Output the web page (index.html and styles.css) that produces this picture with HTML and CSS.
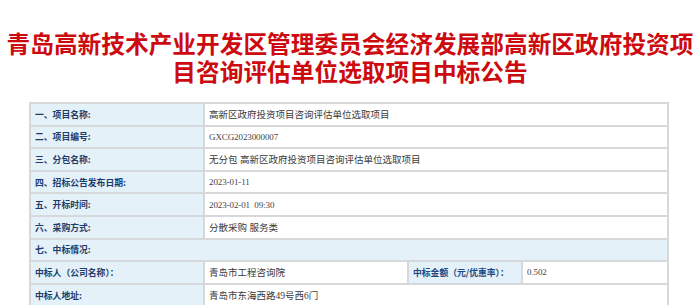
FILE: index.html
```html
<!DOCTYPE html>
<html lang="zh-CN">
<head>
<meta charset="utf-8">
<title>中标公告</title>
<link rel="stylesheet" href="styles.css">
</head>
<body>
<div class="page">
  <h1 class="title">青岛高新技术产业开发区管理委员会经济发展部高新区政府投资项目咨询评估单位选取项目中标公告</h1>
  <table class="info">
    <colgroup>
      <col class="c1"><col class="c2"><col class="c3"><col class="c4">
    </colgroup>
    <tr><td class="lbl">一、项目名称:</td><td class="val" colspan="3">高新区政府投资项目咨询评估单位选取项目</td></tr>
    <tr><td class="lbl">二、项目编号:</td><td class="val mono" colspan="3">GXCG2023000007</td></tr>
    <tr><td class="lbl">三、分包名称:</td><td class="val" colspan="3">无分包 高新区政府投资项目咨询评估单位选取项目</td></tr>
    <tr><td class="lbl">四、招标公告发布日期:</td><td class="val mono" colspan="3">2023-01-11</td></tr>
    <tr><td class="lbl">五、开标时间:</td><td class="val mono" colspan="3">2023-02-01&nbsp; 09:30</td></tr>
    <tr><td class="lbl">六、采购方式:</td><td class="val" colspan="3">分散采购 服务类</td></tr>
    <tr><td class="lbl" colspan="4">七、中标情况:</td></tr>
    <tr><td class="lbl">中标人（公司名称）：</td><td class="val">青岛市工程咨询院</td><td class="lbl lbl2">中标金额（元/优惠率）：</td><td class="val mono">0.502</td></tr>
    <tr><td class="lbl">中标人地址:</td><td class="val" colspan="3">青岛市东海西路49号西6门</td></tr>
  </table>
</div>
</body>
</html>
```

FILE: styles.css
```css
html, body {
  margin: 0;
  padding: 0;
  background: #ffffff;
}
.page {
  padding-top: 29px;
}
.title {
  margin: 0;
  font-family: "Noto Sans CJK SC", sans-serif;
  font-size: 23.7px;
  font-weight: 700;
  line-height: 28px;
  color: #cc0a0f;
  text-align: center;
}
.info {
  margin: 17px 0 0 29px;
  width: 640px;
  border-collapse: collapse;
  table-layout: fixed;
  border: 2px solid #c7cacd;
}
.c1 { width: 174px; }
.c2 { width: 204px; }
.c3 { width: 114px; }
.c4 { width: auto; }
.info td {
  height: 20.6px;
  padding: 0 0 0 4px;
  border: 2px solid #d6d8db;
  vertical-align: middle;
  white-space: nowrap;
  overflow: hidden;
}
.lbl {
  background: #e4f1f8;
  font-family: "Noto Sans CJK SC", sans-serif;
  font-size: 8.8px;
  font-weight: 700;
  color: #1d3b6a;
}
.lbl2 {
  color: #1a4a85;
}
.val {
  background: #ffffff;
  font-family: "Liberation Serif", "Noto Sans CJK SC", serif;
  font-size: 9.5px;
  color: #3a3a3a;
}
.mono {
  font-family: "Liberation Serif", serif;
  font-size: 9px;
  letter-spacing: -0.1px;
  color: #444444;
}
```
